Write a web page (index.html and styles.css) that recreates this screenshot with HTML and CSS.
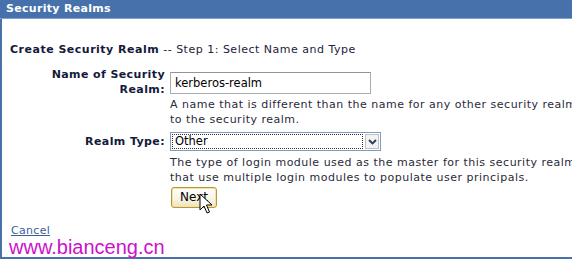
FILE: index.html
```html
<!DOCTYPE html>
<html>
<head>
<meta charset="utf-8">
<link rel="stylesheet" href="styles.css">
</head>
<body>
<div class="frame">
  <div class="header">Security Realms</div>
  <div class="content">
    <div class="title"><b>Create Security Realm</b> -- Step 1: Select Name and Type</div>
    <div class="form">
      <div class="label">Name of Security<br>Realm:</div>
      <div class="field field-a"><div class="input">kerberos-realm</div></div>
      <div></div>
      <div class="help help-a">A name that is different than the name for any other security realm<br>to the security realm.</div>
      <div class="label">Realm Type:</div>
      <div class="field">
        <div class="select"><span class="sel-text"><span class="focus">Other</span></span><span class="arrow"><svg width="9" height="6" viewBox="0 0 9 6"><path d="M1 1 L4.5 4.5 L8 1" fill="none" stroke="#2a3a5a" stroke-width="1.8"/></svg></span></div>
      </div>
      <div></div>
      <div class="help help-b">The type of login module used as the master for this security realm<br>that use multiple login modules to populate user principals.</div>
      <div></div>
      <div class="field btnrow">
        <div class="btn">Next</div>
        <svg class="cursor" width="14" height="22" viewBox="0 0 14 22"><path d="M1 1 L1 17 L5 13 L8 20 L10.5 19 L7.5 12 L13 12 Z" fill="#fff" stroke="#000" stroke-width="1"/></svg>
      </div>
    </div>
    <a class="cancel" href="#">Cancel</a>
  </div>
  <div class="watermark">www.bianceng.cn</div>
</div>
</body>
</html>
```
FILE: styles.css
```css
html, body {
  margin: 0;
  padding: 0;
  overflow: hidden;
  background: #fff;
}
body {
  width: 572px;
  height: 260px;
  font-family: "DejaVu Sans", Verdana, sans-serif;
  font-size: 11px;
  letter-spacing: 0.5px;
  color: #1c1c30;
}
.frame {
  position: relative;
  width: 760px;
  height: 259px;
  border-left: 2px solid #4a72a8;
  border-bottom: 2px solid #4a72a8;
  box-sizing: border-box;
}
.header {
  margin-left: -2px;
  height: 18px;
  background: #4671ab;
  border-bottom: 1px solid #7fa3d0;
  color: #fff;
  font-weight: bold;
  font-size: 11px;
  letter-spacing: 0.3px;
  line-height: 18px;
  padding-left: 6px;
}
.content {
  padding: 24px 0 0 8px;
}
.title {
  line-height: 14px;
  color: #22223a;
}
.title b {
  color: #141a3a;
}
.form {
  display: grid;
  grid-template-columns: 155px auto;
  column-gap: 5px;
  margin-top: 10px;
  align-items: center;
}
.label {
  text-align: right;
  font-weight: bold;
  color: #141a3a;
  line-height: 15px;
  letter-spacing: 0.4px;
}
.field {
  display: flex;
  align-items: center;
}
.field-a {
  padding-top: 2px;
}
.input {
  width: 191px;
  height: 18px;
  border: 1px solid #a5acb5;
  border-top-color: #8d949c;
  padding: 1px 4px;
  line-height: 18px;
  font-size: 11.5px;
  letter-spacing: 0;
  color: #000;
}
.help {
  white-space: nowrap;
  line-height: 15px;
  color: #2a2a3a;
}
.help-a {
  padding: 0 0 5px;
}
.help-b {
  padding: 4px 0 2px;
}
.select {
  width: 209px;
  height: 17px;
  border: 1px solid #7f9db9;
  display: flex;
  align-items: stretch;
  background: #fff;
  font-size: 11.5px;
  letter-spacing: 0;
  color: #000;
}
.sel-text {
  flex: 1;
  padding: 1px;
  display: flex;
}
.focus {
  flex: 1;
  border: 1px dotted #333;
  line-height: 13px;
  padding-left: 2px;
}
.arrow {
  width: 14px;
  margin: 1px;
  border: 1px solid #b9c2cc;
  background: #f2f2f2;
  display: flex;
  align-items: center;
  justify-content: center;
  box-sizing: border-box;
}
.btnrow {
  position: relative;
}
.btn {
  width: 44px;
  height: 19px;
  margin-left: 1px;
  border: 1px solid #b8963a;
  border-radius: 3px;
  box-shadow: inset 0 0 0 1px #f4e1a4;
  background: linear-gradient(#ffffff 0%, #f7f3e6 60%, #efe2b4 100%);
  text-align: center;
  line-height: 19px;
  font-size: 12px;
  letter-spacing: 0;
  color: #000;
}
.cursor {
  position: absolute;
  left: 29px;
  top: 6px;
}
.cancel {
  display: inline-block;
  margin-top: 16px;
  margin-left: 1px;
  color: #3a5f99;
  text-decoration: underline;
  line-height: 14px;
  letter-spacing: 0.3px;
}
.watermark {
  position: absolute;
  left: 7px;
  top: 235px;
  font-family: "Liberation Sans", Arial, sans-serif;
  font-size: 20px;
  letter-spacing: 0;
  color: #cc11cc;
  line-height: 24px;
}
```
